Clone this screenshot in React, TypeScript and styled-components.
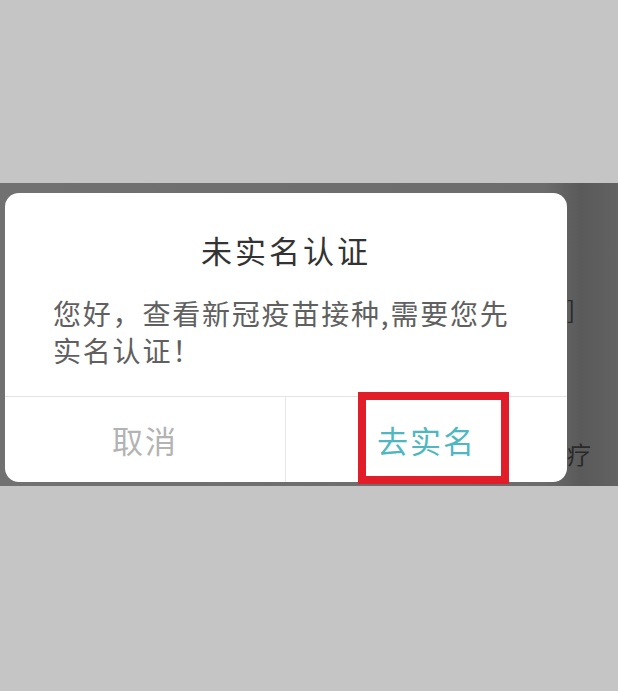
import * as React from 'react';
import styled, { createGlobalStyle } from 'styled-components';

const GlobalStyle = createGlobalStyle`
  html, body {
    margin: 0;
    padding: 0;
    background: #c5c5c5;
    font-family: "Noto Sans CJK SC", "Noto Sans", sans-serif;
  }
`;

const Page = styled.div`
  width: 618px;
  height: 691px;
  padding-top: 183px;
  box-sizing: border-box;
  background: #c5c5c5;
  overflow: hidden;
`;

const Backdrop = styled.div`
  height: 303px;
  box-sizing: border-box;
  padding: 10px 0 4px 5px;
  display: flex;
  background: linear-gradient(90deg, #717171 0%, #6c6c6c 88%, #5a5a5a 94%, #626262 100%);
`;

const Dialog = styled.div`
  width: 562px;
  flex: none;
  background: #fff;
  border-radius: 14px;
  display: flex;
  flex-direction: column;
`;

const Title = styled.div`
  padding-top: 39px;
  line-height: 36px;
  font-size: 31px;
  letter-spacing: 3px;
  color: #333;
  text-align: center;
`;

const Message = styled.div`
  padding: 27px 40px 27px 48px;
  font-size: 28px;
  line-height: 37px;
  letter-spacing: 1.8px;
  color: #606060;
`;

const Actions = styled.div`
  flex: 1;
  display: grid;
  grid-template-columns: 280px 1fr;
  border-top: 1px solid #e4e4e4;
`;

const ActionButton = styled.div<{ $primary?: boolean }>`
  position: relative;
  display: flex;
  align-items: center;
  justify-content: center;
  font-size: 31px;
  letter-spacing: 2px;
  color: ${({ $primary }) => ($primary ? '#4fb7c1' : '#b3b3b3')};
  border-left: ${({ $primary }) => ($primary ? '1px solid #e8e8e8' : 'none')};
`;

const Highlight = styled.div`
  position: absolute;
  left: 72px;
  top: -5px;
  width: 151px;
  height: 92px;
  box-sizing: border-box;
  border: 8px solid #e21d2a;
`;

const Behind = styled.div`
  flex: 1;
  display: flex;
  flex-direction: column;
  padding: 98px 0 0 0;
  gap: 110px;
  font-size: 24px;
  color: #2a2a2a;
`;

export default function App() {
  return (
    <Page>
      <GlobalStyle />
      <Backdrop>
        <Dialog>
          <Title>未实名认证</Title>
          <Message>您好，查看新冠疫苗接种,需要您先实名认证！</Message>
          <Actions>
            <ActionButton>取消</ActionButton>
            <ActionButton $primary>
              去实名
              <Highlight />
            </ActionButton>
          </Actions>
        </Dialog>
        <Behind>
          <span>]</span>
          <span>疗</span>
        </Behind>
      </Backdrop>
    </Page>
  );
}
